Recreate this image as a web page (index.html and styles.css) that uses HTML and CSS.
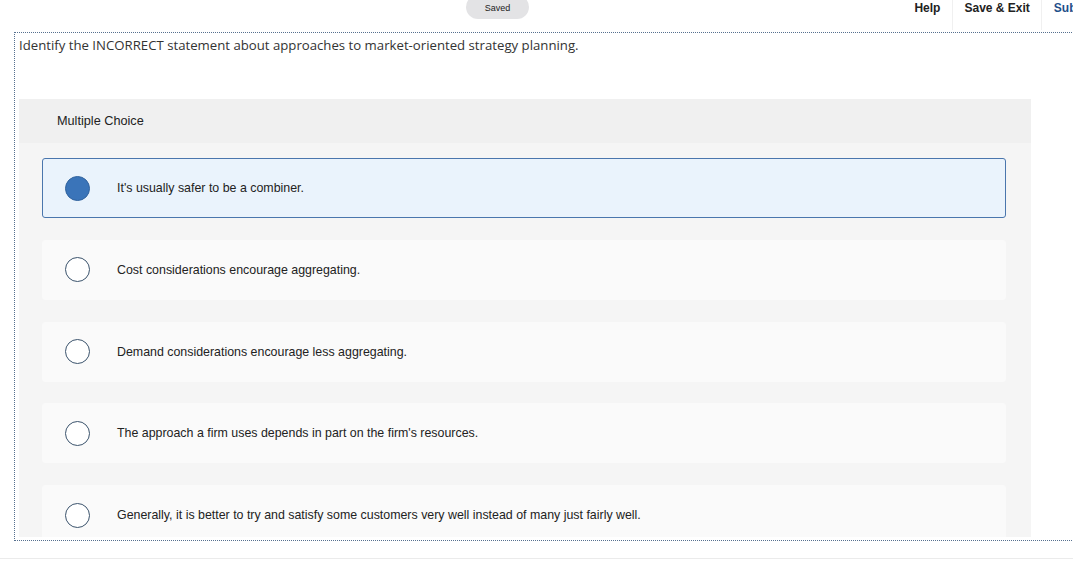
FILE: index.html
```html
<!DOCTYPE html>
<html>
<head>
<meta charset="utf-8">
<link rel="stylesheet" href="styles.css">
</head>
<body>
<header class="topbar">
  <div class="saved">Saved</div>
  <nav class="nav">
    <span class="nav-item">Help</span>
    <span class="sep"></span>
    <span class="nav-item">Save &amp; Exit</span>
    <span class="sep"></span>
    <span class="nav-item submit">Submit</span>
  </nav>
</header>
<main class="question-box">
  <p class="prompt">Identify the INCORRECT statement about approaches to market-oriented strategy planning.</p>
  <section class="panel">
    <div class="panel-head">Multiple Choice</div>
    <div class="options">
      <div class="option selected"><span class="radio"></span><span class="label">It's usually safer to be a combiner.</span></div>
      <div class="option"><span class="radio"></span><span class="label">Cost considerations encourage aggregating.</span></div>
      <div class="option"><span class="radio"></span><span class="label">Demand considerations encourage less aggregating.</span></div>
      <div class="option"><span class="radio"></span><span class="label">The approach a firm uses depends in part on the firm's resources.</span></div>
      <div class="option"><span class="radio"></span><span class="label">Generally, it is better to try and satisfy some customers very well instead of many just fairly well.</span></div>
    </div>
  </section>
</main>
<div class="footer-line"></div>
</body>
</html>
```
FILE: styles.css
```css
html, body {
  margin: 0;
  padding: 0;
  background: #ffffff;
  overflow: hidden;
  width: 1073px;
  height: 564px;
}
body {
  font-family: "Liberation Sans", Arial, sans-serif;
  color: #333333;
}
.topbar {
  position: relative;
  height: 32px;
  display: flex;
  justify-content: flex-end;
}
.saved {
  position: absolute;
  left: 466px;
  top: -5px;
  width: 63px;
  height: 24px;
  border-radius: 12px;
  background: #e3e3e5;
  font-size: 9px;
  color: #222;
  display: flex;
  align-items: center;
  justify-content: center;
  padding-top: 1px;
  box-sizing: border-box;
}
.nav {
  display: flex;
  align-items: flex-start;
  height: 32px;
  margin-right: -33px;
}
.nav-item {
  font-weight: bold;
  font-size: 12px;
  color: #222;
  line-height: 17px;
  padding: 0 11.5px;
}
.submit {
  color: #1f4f8a;
}
.sep {
  width: 1px;
  height: 30px;
  background: #f0f0f0;
}
.question-box {
  margin-left: 14px;
  width: 1100px;
  height: 509px;
  border: 1px dotted #56708f;
  border-right: none;
  overflow: hidden;
  box-sizing: border-box;
  padding-left: 4px;
}
.prompt {
  margin: 0;
  padding-top: 4px;
  font-family: "Open Sans", "Liberation Sans", sans-serif;
  font-size: 13.2px;
  line-height: 16px;
  height: 66px;
  color: #333;
  box-sizing: border-box;
}
.panel {
  width: 1012px;
  height: 438px;
  background: #f5f5f5;
  overflow: hidden;
}
.panel-head {
  height: 44px;
  background: #f0f0f0;
  padding-left: 38px;
  box-sizing: border-box;
  font-size: 12.7px;
  line-height: 44px;
  color: #222;
}
.options {
  padding: 15px 0 0 23px;
  display: flex;
  flex-direction: column;
  gap: 21.75px;
}
.option {
  width: 964px;
  height: 60px;
  box-sizing: border-box;
  background: #fafafa;
  border-radius: 3px;
  border: 1px solid #fafafa;
  display: flex;
  align-items: center;
  padding-left: 22px;
}
.option.selected {
  background: #eaf3fc;
  border-color: #4a76ad;
}
.radio {
  width: 25px;
  height: 25px;
  box-sizing: border-box;
  border-radius: 50%;
  border: 1.5px solid #3b536c;
  background: #ffffff;
  flex: none;
}
.selected .radio {
  background: #3a74b9;
  border-color: #31639e;
}
.label {
  margin-left: 27px;
  font-size: 12.4px;
  color: #222;
}
.footer-line {
  margin-top: 17px;
  height: 1px;
  background: #ebebeb;
}
```
